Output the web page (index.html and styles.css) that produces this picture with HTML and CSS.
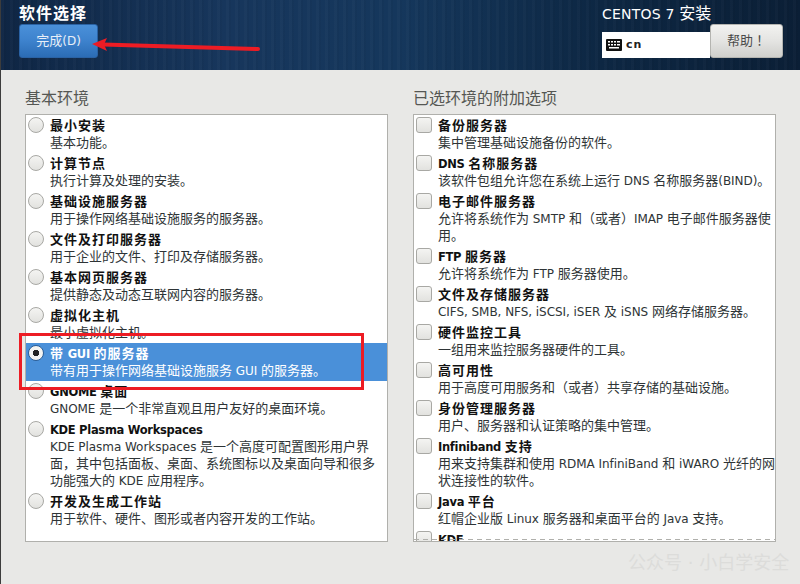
FILE: index.html
```html
<!DOCTYPE html>
<html lang="zh-CN">
<head>
<meta charset="utf-8">
<title>软件选择</title>
<link rel="stylesheet" href="styles.css">
</head>
<body>
<div class="page">
  <header class="header">
    <div class="head-left">
      <div class="spoke-title">软件选择</div>
      <button class="done">完成<span class="l">(D)</span></button>
    </div>
    <div class="head-right">
      <div class="product"><span class="l">CENTOS 7 </span>安装</div>
      <div class="head-tools">
        <div class="layout">
          <svg class="kbd" width="16" height="12" viewBox="0 0 16 12"><rect width="16" height="12" rx="1" fill="#111"/><g fill="#fff"><rect x="2" y="2" width="2" height="1.5"/><rect x="5" y="2" width="2" height="1.5"/><rect x="8" y="2" width="2" height="1.5"/><rect x="11" y="2" width="3" height="1.5"/><rect x="2" y="5" width="2" height="1.5"/><rect x="5" y="5" width="2" height="1.5"/><rect x="8" y="5" width="2" height="1.5"/><rect x="11" y="5" width="3" height="1.5"/><rect x="3" y="8" width="10" height="1.5"/></g></svg>
          <span class="layout-name">cn</span>
        </div>
        <button class="help" lang="zh-TW">帮助！</button>
      </div>
    </div>
  </header>
  <main class="columns">
    <section class="col">
      <h2 class="col-title">基本环境</h2>
      <div class="list">
        <div class="item"><span class="radio"></span><div class="txt"><div class="name">最小安装</div><div class="desc">基本功能。</div></div></div>
        <div class="item"><span class="radio"></span><div class="txt"><div class="name">计算节点</div><div class="desc">执行计算及处理的安装。</div></div></div>
        <div class="item"><span class="radio"></span><div class="txt"><div class="name">基础设施服务器</div><div class="desc">用于操作网络基础设施服务的服务器。</div></div></div>
        <div class="item"><span class="radio"></span><div class="txt"><div class="name">文件及打印服务器</div><div class="desc">用于企业的文件、打印及存储服务器。</div></div></div>
        <div class="item"><span class="radio"></span><div class="txt"><div class="name">基本网页服务器</div><div class="desc">提供静态及动态互联网内容的服务器。</div></div></div>
        <div class="item"><span class="radio"></span><div class="txt"><div class="name">虚拟化主机</div><div class="desc">最小虚拟化主机。</div></div></div>
        <div class="item selected"><span class="radio checked"></span><div class="txt"><div class="name">带<span class="l"> GUI </span>的服务器</div><div class="desc">带有用于操作网络基础设施服务<span class="l"> GUI </span>的服务器。</div></div></div>
        <div class="item"><span class="radio"></span><div class="txt"><div class="name"><span class="l">GNOME </span>桌面</div><div class="desc"><span class="l">GNOME </span>是一个非常直观且用户友好的桌面环境。</div></div></div>
        <div class="item"><span class="radio"></span><div class="txt"><div class="name"><span class="l">KDE Plasma Workspaces</span></div><div class="desc"><span class="l">KDE Plasma Workspaces </span>是一个高度可配置图形用户界<br>面，其中包括面板、桌面、系统图标以及桌面向导和很多<br>功能强大的<span class="l"> KDE </span>应用程序。</div></div></div>
        <div class="item"><span class="radio"></span><div class="txt"><div class="name">开发及生成工作站</div><div class="desc">用于软件、硬件、图形或者内容开发的工作站。</div></div></div>
      </div>
    </section>
    <section class="col">
      <h2 class="col-title">已选环境的附加选项</h2>
      <div class="list">
        <div class="item"><span class="check"></span><div class="txt"><div class="name">备份服务器</div><div class="desc">集中管理基础设施备份的软件。</div></div></div>
        <div class="item"><span class="check"></span><div class="txt"><div class="name"><span class="l">DNS </span>名称服务器</div><div class="desc">该软件包组允许您在系统上运行<span class="l"> DNS </span>名称服务器<span class="l">(BIND)</span>。</div></div></div>
        <div class="item"><span class="check"></span><div class="txt"><div class="name">电子邮件服务器</div><div class="desc">允许将系统作为<span class="l"> SMTP </span>和（或者）<span class="l">IMAP </span>电子邮件服务器使<br>用。</div></div></div>
        <div class="item"><span class="check"></span><div class="txt"><div class="name"><span class="l">FTP </span>服务器</div><div class="desc">允许将系统作为<span class="l"> FTP </span>服务器使用。</div></div></div>
        <div class="item"><span class="check"></span><div class="txt"><div class="name">文件及存储服务器</div><div class="desc"><span class="l">CIFS, SMB, NFS, iSCSI, iSER </span>及<span class="l"> iSNS </span>网络存储服务器。</div></div></div>
        <div class="item"><span class="check"></span><div class="txt"><div class="name">硬件监控工具</div><div class="desc">一组用来监控服务器硬件的工具。</div></div></div>
        <div class="item"><span class="check"></span><div class="txt"><div class="name">高可用性</div><div class="desc">用于高度可用服务和（或者）共享存储的基础设施。</div></div></div>
        <div class="item"><span class="check"></span><div class="txt"><div class="name">身份管理服务器</div><div class="desc">用户、服务器和认证策略的集中管理。</div></div></div>
        <div class="item"><span class="check"></span><div class="txt"><div class="name"><span class="l">Infiniband </span>支持</div><div class="desc">用来支持集群和使用<span class="l"> RDMA InfiniBand </span>和<span class="l"> iWARO </span>光纤的网<br>状连接性的软件。</div></div></div>
        <div class="item"><span class="check"></span><div class="txt"><div class="name"><span class="l">Java </span>平台</div><div class="desc">红帽企业版<span class="l"> Linux </span>服务器和桌面平台的<span class="l"> Java </span>支持。</div></div></div>
        <div class="item"><span class="check"></span><div class="txt"><div class="name"><span class="l">KDE</span></div></div></div>
        <div class="undershoot"></div>
      </div>
    </section>
  </main>
  <div class="red-box"></div>
  <svg class="arrow" width="180" height="24" viewBox="0 0 180 24"><path d="M167 16 L12 11.5" stroke="#ed1c24" stroke-width="4" stroke-linecap="round" fill="none"/><path d="M1 11 L16 5 L13 11.5 L16 18 Z" fill="#ed1c24"/></svg>
  <div class="watermark">公众号 · 小白学安全</div>
</div>
</body>
</html>
```

FILE: styles.css
```css
* { box-sizing: border-box; }
html, body { margin: 0; padding: 0; }
body {
  width: 800px;
  height: 584px;
  overflow: hidden;
  font-family: "DejaVu Sans", "Noto Sans CJK SC", sans-serif;
}
.page {
  position: relative;
  width: 800px;
  height: 584px;
  background: #e8e8e6;
  border-left: 1px solid #3c3c3c;
  overflow: hidden;
}
.l { line-height: 1; }
.header {
  height: 70px;
  display: flex;
  justify-content: space-between;
  padding: 0 12px 0 18px;
  background:
    repeating-linear-gradient(90deg, rgba(255,255,255,.018) 0 3px, rgba(0,0,0,.03) 3px 5px, rgba(255,255,255,0) 5px 9px),
    linear-gradient(90deg, #0f2644 0%, #17365c 28%, #15375c 50%, #0d2743 75%, #0b1f36 100%);
}
.head-left { display: flex; flex-direction: column; }
.spoke-title {
  margin-top: 3px;
  height: 21px;
  line-height: 21px;
  font-size: 16px;
  font-weight: bold;
  letter-spacing: 1px;
  color: #fff;
}
.done {
  width: 79px;
  height: 34px;
  margin: 0;
  padding: 0 0 3px;
  border: 1px solid #2a62a4;
  border-radius: 3px;
  background: linear-gradient(180deg, #4a90d9 0%, #3d82cd 50%, #2b6cb5 100%);
  color: #e8eff8;
  font: 13px "DejaVu Sans", "Noto Sans CJK SC", sans-serif;
}
.done .l { font-size: 12px; }
.head-right { display: flex; flex-direction: column; width: 186px; }
.product {
  margin: 3px 0 0;
  height: 21px;
  line-height: 21px;
  font-size: 16px;
  color: #fff;
  white-space: nowrap;
}
.product .l { font-size: 14px; letter-spacing: .2px; }
.head-tools { display: flex; }
.layout {
  width: 108px;
  height: 26px;
  margin-top: 8px;
  background: #fff;
  display: flex;
  align-items: center;
  gap: 4px;
  padding-left: 4px;
}
.layout-name { font-size: 11px; font-weight: bold; letter-spacing: 1px; color: #222; line-height: 1; padding-bottom: 1px; }
.help {
  width: 73px;
  height: 34px;
  margin: 0;
  padding: 0 0 3px;
  border: 1px solid #b4b4b0;
  border-radius: 3px;
  background: linear-gradient(180deg, #f2f2f0 0%, #e4e4e2 50%, #cfcfcc 100%);
  color: #4a4a4a;
  font: 13px "DejaVu Sans", "Noto Sans CJK TC", sans-serif;
}
.columns {
  display: flex;
  gap: 25px;
  padding: 18px 0 0 24px;
}
.col { width: 363px; }
.col-title {
  margin: 0 0 5px;
  height: 21px;
  line-height: 21px;
  font-size: 16px;
  font-weight: normal;
  color: #555753;
}
.list {
  position: relative;
  height: 428px;
  background: #fff;
  border: 1px solid #b0b0ac;
  overflow: hidden;
}
.item {
  display: flex;
  padding: 2px 0 2px 2px;
  color: #2e3436;
}
.txt {
  padding-left: 6px;
  flex: 1;
  min-width: 0;
}
.name {
  height: 17px;
  line-height: 18px;
  font-size: 13px;
  font-weight: bold;
  letter-spacing: 1px;
  color: #111;
  white-space: nowrap;
}
.name .l { font-size: 11.5px; letter-spacing: -.3px; }
.desc {
  line-height: 17px;
  font-size: 13px;
  color: #2e3436;
  white-space: nowrap;
}
.desc .l { font-size: 12px; letter-spacing: -.05px; }
.selected { background: #4a90d9; }
.selected .name, .selected .desc { color: #fff; }
.radio, .check {
  flex: none;
  width: 16px;
  height: 16px;
  background: linear-gradient(180deg, #f4f4f2, #e2e2df);
  border: 1px solid #a8a8a4;
}
.radio { border-radius: 50%; }
.check { border-radius: 3px; }
.checked {
  background: radial-gradient(circle, #222 0 3px, #f4f4f2 3.5px);
  border-color: #2e5f96;
}
.undershoot {
  position: absolute;
  left: 0;
  right: 0;
  bottom: 1px;
  height: 1px;
  background: repeating-linear-gradient(90deg, #b0b0ac 0 5px, transparent 5px 9px);
}
.red-box {
  position: absolute;
  left: 18px;
  top: 333px;
  width: 345px;
  height: 57px;
  border: 3px solid #ed1c24;
}
.arrow {
  position: absolute;
  left: 90px;
  top: 33px;
}
.watermark {
  position: absolute;
  left: 627px;
  top: 551px;
  font-size: 18px;
  line-height: 24px;
  color: #dcdcda;
  white-space: nowrap;
}
```
